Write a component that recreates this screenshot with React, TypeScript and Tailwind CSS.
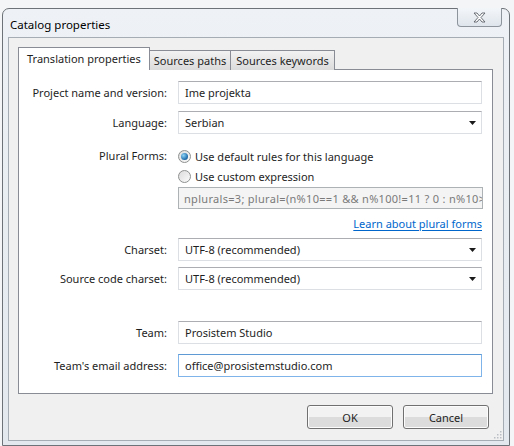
import React from 'react';

const font = "font-['Segoe_UI','Noto_Sans','Open_Sans',sans-serif]";

function Arrow() {
  return (
    <svg width="7" height="4" viewBox="0 0 7 4" className="shrink-0">
      <path d="M0 0h7L3.5 4z" fill="#1a1a1a" />
    </svg>
  );
}

function Row({ label, children, className = '' }: { label: string; children: React.ReactNode; className?: string }) {
  return (
    <div className={`flex items-center ${className}`}>
      <div className="w-[149px] shrink-0 pr-[1px] text-right text-[#1e1e1e]">{label}</div>
      <div className="ml-[10px] w-[304px]">{children}</div>
    </div>
  );
}

function TextBox({ value, focused }: { value: string; focused?: boolean }) {
  return (
    <div
      className={`flex h-[23px] items-center border bg-white px-[6px] text-[#1e1e1e] ${
        focused ? 'border-[#7eb4ea] border-t-[#5f9ad4]' : 'border-[#dcdfe3] border-t-[#abadb3]'
      }`}
    >
      {value}
    </div>
  );
}

function Combo({ value }: { value: string }) {
  return (
    <div className="flex h-[23px] items-center justify-between border border-[#dcdfe3] border-t-[#abadb3] bg-white pl-[6px] pr-[5px] text-[#1e1e1e]">
      <span>{value}</span>
      <Arrow />
    </div>
  );
}

function Radio({ checked }: { checked?: boolean }) {
  return (
    <span className="flex h-[13px] w-[13px] shrink-0 items-center justify-center rounded-full border border-[#8e8f8f] bg-gradient-to-br from-[#dcdcdc] to-[#fbfbfb]">
      {checked && (
        <span className="h-[7px] w-[7px] rounded-full bg-[radial-gradient(circle_at_35%_35%,#8fd4f7,#1b68a8_70%,#0e3b66)]" />
      )}
    </span>
  );
}

function Button({ children }: { children: React.ReactNode }) {
  return (
    <div className="flex h-[24px] w-[86px] items-center justify-center rounded-[3px] border border-[#707070] bg-gradient-to-b from-[#f2f2f2] from-50% to-[#dcdcdc] to-50% text-[#1e1e1e] shadow-[inset_0_0_0_1px_#fcfcfc]">
      {children}
    </div>
  );
}

export default function App() {
  return (
    <div className={`h-[446px] w-[514px] overflow-hidden bg-[#f4f5f6] pl-[2px] pr-[4px] pt-[8px] text-[11px] leading-none ${font}`}>
      <div className="relative flex h-[438px] flex-col rounded-t-[7px] border border-[#6d7278] bg-gradient-to-b from-[#eef2f6] to-[#e2e8ee] px-[5px] pb-[4px]">
        {/* title bar */}
        <div className="flex h-[28px] items-start justify-between">
          <div className="pl-[2px] pt-[10px] text-[11.5px] text-black">Catalog properties</div>
          <div className="-mt-[1px] mr-[2px] flex h-[19px] w-[45px] items-center justify-center rounded-b-[4px] border border-t-0 border-[#8d949c] bg-gradient-to-b from-[#f3f6f9] to-[#dfe5ec]">
            <svg width="15" height="11" viewBox="0 0 15 11">
              <path
                d="M2 1h3l2.5 3L10 1h3L9 5.5 13 10h-3L7.5 7 5 10H2l4-4.5z"
                fill="#fdfdfd"
                stroke="#5b6169"
                strokeWidth="0.9"
                strokeLinejoin="round"
              />
            </svg>
          </div>
        </div>

        {/* client area */}
        <div className="flex flex-1 flex-col border border-[#a6acb3] bg-[#f0f0f0] px-[9px] pt-[9px]">
          {/* tab strip */}
          <div className="relative z-10 flex h-[23px] items-end text-[#1e1e1e]">
            <div className="flex h-[23px] items-center border border-b-0 border-[#898c95] bg-white px-[8px] pb-[1px]">
              Translation properties
            </div>
            <div className="-ml-[1px] flex h-[20px] items-center border border-b-0 border-[#898c95] bg-gradient-to-b from-[#f2f2f2] to-[#dbdbdb] px-[4px]">
              Sources paths
            </div>
            <div className="flex h-[20px] items-center border border-b-0 border-l-0 border-[#898c95] bg-gradient-to-b from-[#f2f2f2] to-[#dbdbdb] px-[5px]">
              Sources keywords
            </div>
          </div>

          {/* tab pane */}
          <div className="-mt-[1px] flex h-[325px] w-[475px] flex-col border border-[#898c95] bg-white pt-[11px]">
            <Row label="Project name and version:">
              <TextBox value="Ime projekta" />
            </Row>
            <Row label="Language:" className="mt-[7px]">
              <Combo value="Serbian" />
            </Row>

            <div className="mt-[15px] flex">
              <div className="w-[149px] shrink-0 pr-[1px] pt-[1px] text-right text-[#1e1e1e]">Plural Forms:</div>
              <div className="ml-[10px] flex w-[305px] flex-col">
                <label className="flex h-[14px] items-center gap-[4px] text-[#1e1e1e]">
                  <Radio checked />
                  <span>Use default rules for this language</span>
                </label>
                <label className="mt-[6px] flex h-[14px] items-center gap-[4px] text-[#1e1e1e]">
                  <Radio />
                  <span>Use custom expression</span>
                </label>
                <div className="mt-[4px] flex h-[22px] items-center overflow-hidden whitespace-nowrap border border-[#adb2b5] bg-[#f4f4f4] px-[5px] text-[11px] tracking-[0.3px] text-[#7a7a7a]">
                  nplurals=3; plural=(n%10==1 &amp;&amp; n%100!=11 ? 0 : n%10&gt;=2 &amp;&amp; n%10&lt;=4 ? 1 : 2);
                </div>
                <div className="mt-[9px] flex justify-end pr-[1px]">
                  <span className="text-[#0066cc] underline decoration-[#0066cc] underline-offset-2">Learn about plural forms</span>
                </div>
              </div>
            </div>

            <Row label="Charset:" className="mt-[9px]">
              <Combo value="UTF-8 (recommended)" />
            </Row>
            <Row label="Source code charset:" className="mt-[6px]">
              <Combo value="UTF-8 (recommended)" />
            </Row>
            <Row label="Team:" className="mt-[31px]">
              <TextBox value="Prosistem Studio" />
            </Row>
            <Row label="Team's email address:" className="mt-[10px]">
              <TextBox value="office@prosistemstudio.com" focused />
            </Row>
          </div>

          {/* buttons */}
          <div className="mt-[11px] flex justify-end gap-[10px] pr-[5px]">
            <Button>OK</Button>
            <Button>Cancel</Button>
          </div>
        </div>

        <svg width="8" height="8" viewBox="0 0 8 8" className="absolute bottom-[6px] right-[7px]">
          <rect x="6" y="0" width="1.5" height="1.5" fill="#b9bec4" />
          <rect x="3" y="3" width="1.5" height="1.5" fill="#b9bec4" />
          <rect x="6" y="3" width="1.5" height="1.5" fill="#b9bec4" />
          <rect x="0" y="6" width="1.5" height="1.5" fill="#b9bec4" />
          <rect x="3" y="6" width="1.5" height="1.5" fill="#b9bec4" />
          <rect x="6" y="6" width="1.5" height="1.5" fill="#b9bec4" />
        </svg>
      </div>
    </div>
  );
}
